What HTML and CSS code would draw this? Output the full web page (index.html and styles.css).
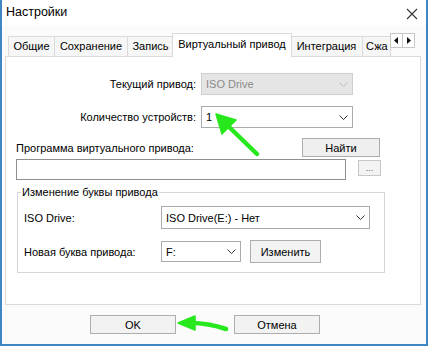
FILE: index.html
```html
<!DOCTYPE html>
<html lang="ru">
<head>
<meta charset="utf-8">
<title>Настройки</title>
<link rel="stylesheet" href="styles.css">
</head>
<body>
<div class="window">
  <div class="titlebar">
    <span class="title">Настройки</span>
    <svg class="close" width="12" height="12" viewBox="0 0 12 12"><path d="M1 1L11 11M11 1L1 11" stroke="#333" stroke-width="1.1" fill="none"/></svg>
  </div>
  <div class="tabstrip">
    <div class="tab t1">Общие</div>
    <div class="tab t2">Сохранение</div>
    <div class="tab t3">Запись</div>
    <div class="tab selected">Виртуальный привод</div>
    <div class="tab t5">Интеграция</div>
    <div class="tab t6">Сжа</div>
    <div class="scroller">
      <div class="sbtn"><svg width="5" height="7" viewBox="0 0 5 7"><path d="M4 0V7L0 3.5Z" fill="#111"/></svg></div>
      <div class="sbtn"><svg width="5" height="7" viewBox="0 0 5 7"><path d="M1 0V7L5 3.5Z" fill="#111"/></svg></div>
    </div>
  </div>
  <div class="panel">
    <div class="row r1">
      <span class="rlabel">Текущий привод:</span>
      <div class="combo disabled w152"><span>ISO Drive</span><svg class="chev" width="9" height="5" viewBox="0 0 9 5"><path d="M0.5 0.5L4.5 4.5L8.5 0.5" stroke="#bbb" fill="none"/></svg></div>
    </div>
    <div class="row r2">
      <span class="rlabel">Количество устройств:</span>
      <div class="combo w152"><span>1</span><svg class="chev" width="9" height="5" viewBox="0 0 9 5"><path d="M0.5 0.5L4.5 4.5L8.5 0.5" stroke="#333" fill="none"/></svg></div>
    </div>
    <div class="row r3">
      <span>Программа виртуального привода:</span>
      <button class="btn find">Найти</button>
    </div>
    <div class="row r4">
      <div class="input"></div>
      <button class="btn dots">...</button>
    </div>
    <div class="group">
      <span class="gtitle">Изменение буквы привода</span>
      <div class="grow ga">
        <span class="glabel">ISO Drive:</span>
        <div class="combo w209"><span>ISO Drive(E:) - Нет</span><svg class="chev" width="9" height="5" viewBox="0 0 9 5"><path d="M0.5 0.5L4.5 4.5L8.5 0.5" stroke="#333" fill="none"/></svg></div>
      </div>
      <div class="grow gb">
        <span class="glabel">Новая буква привода:</span>
        <div class="combo w80"><span>F:</span><svg class="chev" width="9" height="5" viewBox="0 0 9 5"><path d="M0.5 0.5L4.5 4.5L8.5 0.5" stroke="#333" fill="none"/></svg></div>
        <button class="btn change">Изменить</button>
      </div>
    </div>
  </div>
  <div class="footer">
    <button class="btn ok">OK</button>
    <button class="btn cancel">Отмена</button>
  </div>
</div>
<svg class="arrow arrow1" width="60" height="60" viewBox="0 0 60 60">
  <g fill="#27e81d" stroke="#27e81d" stroke-linecap="round">
    <path d="M13 12L44 42" stroke-width="4.5"/>
    <path d="M3 2L23 8L9 22Z" stroke-width="1.5" stroke-linejoin="round"/>
  </g>
</svg>
<svg class="arrow arrow2" width="60" height="22" viewBox="0 0 60 22">
  <g fill="#27e81d" stroke="#27e81d" stroke-linecap="round">
    <path d="M15 7Q32 7 50 13" stroke-width="4.5" fill="none"/>
    <path d="M2 7L19 0L19 14Z" stroke-width="1.5" stroke-linejoin="round"/>
  </g>
</svg>
</body>
</html>
```
FILE: styles.css
```css
html, body {
  margin: 0;
  padding: 0;
  background: #ffffff;
}
body {
  font-family: "Liberation Sans", Arial, sans-serif;
  font-size: 11px;
  color: #000;
  position: relative;
  width: 429px;
  height: 348px;
  overflow: hidden;
}
.window {
  width: 424px;
  height: 344px;
  border-left: 2px solid #3f86c4;
  border-right: 2px solid #3f86c4;
  border-bottom: 2px solid #3f86c4;
  background: #fbfbfb;
  display: flex;
  flex-direction: column;
}
.titlebar {
  height: 26px;
  display: flex;
  align-items: center;
  justify-content: space-between;
  background: #ffffff;
  padding: 0 8px 0 4px;
  flex: none;
}
.title {
  font-size: 12.5px;
  margin-top: -2px;
}
.close {
  margin-top: 1px;
}
.tabstrip {
  height: 30px;
  display: flex;
  align-items: flex-end;
  padding-left: 6px;
  flex: none;
  position: relative;
}
.tab {
  height: 20px;
  line-height: 19px;
  box-sizing: border-box;
  border: 1px solid #dadada;
  border-bottom: none;
  margin-right: -1px;
  background: #f6f6f6;
  text-align: center;
  white-space: nowrap;
  overflow: hidden;
}
.t1 { width: 47px; }
.t2 { width: 74px; }
.t3 { width: 47px; }
.t5 { width: 73px; }
.t6 { width: 29px; text-align: left; padding-left: 3px; }
.tab.selected {
  height: 24px;
  line-height: 20px;
  width: 120px;
  background: #ffffff;
  margin-left: -1px;
  margin-right: -2px;
  position: relative;
  z-index: 2;
  margin-bottom: -1px;
}
.scroller {
  display: flex;
  align-self: flex-start;
  margin-top: 7px;
  margin-left: 0;
}
.sbtn {
  width: 13px;
  height: 15px;
  box-sizing: border-box;
  border: 1px solid #c8c8c8;
  background: #ffffff;
  display: flex;
  align-items: center;
  justify-content: center;
  margin-right: -1px;
}
.panel {
  margin-left: 3px;
  width: 416px;
  height: 249px;
  box-sizing: border-box;
  border: 1px solid #dadada;
  background: #ffffff;
  padding-top: 16px;
  flex: none;
}
.row {
  display: flex;
  align-items: center;
}
.r1, .r2 { height: 22px; }
.r2 { margin-top: 11px; }
.rlabel {
  width: 190px;
  text-align: right;
  margin-right: 5px;
}
.combo {
  height: 22px;
  box-sizing: border-box;
  border: 1px solid #acacac;
  background: #ffffff;
  display: flex;
  align-items: center;
  justify-content: space-between;
  padding: 0 4px 0 4px;
}
.combo.disabled {
  background: #e5e5e5;
  border-color: #cfcfcf;
  color: #8a8a8a;
}
.w152 { width: 152px; }
.w209 { width: 209px; height: 23px; }
.w80 { width: 80px; height: 21px; }
.btn {
  font-family: inherit;
  font-size: 11px;
  color: #000;
  background: #efefef;
  border: 1px solid #adadad;
  padding: 0;
  margin: 0;
  box-sizing: border-box;
}
.r3 {
  margin-top: 10px;
  margin-left: 10px;
  width: 364px;
  justify-content: space-between;
  height: 19px;
}
.find { width: 78px; height: 19px; }
.r4 {
  margin-top: 2px;
  margin-left: 10px;
  align-items: flex-start;
}
.input {
  width: 330px;
  height: 21px;
  box-sizing: border-box;
  border: 1px solid #8f8f8f;
  background: #ffffff;
}
.dots {
  width: 23px;
  height: 16px;
  margin-left: 12px;
  margin-top: 1px;
  font-size: 9px;
  color: #555;
  line-height: 10px;
  background: #f3f3f3;
  border-color: #c8c8c8;
}
.group {
  position: relative;
  margin-top: 12px;
  margin-left: 11px;
  width: 368px;
  height: 81px;
  box-sizing: border-box;
  border: 1px solid #d5d5d5;
  padding: 13px 0 0 6px;
}
.gtitle {
  position: absolute;
  top: -7px;
  left: 3px;
  background: #ffffff;
  padding: 0 1px;
  line-height: 13px;
}
.grow {
  display: flex;
  align-items: center;
}
.glabel {
  width: 137px;
}
.gb {
  margin-top: 11px;
}
.change {
  width: 71px;
  height: 23px;
  margin-left: 9px;
  background: #f3f3f3;
}
.footer {
  display: flex;
  padding: 10px 0 0 88px;
  gap: 58px;
}
.ok, .cancel {
  width: 86px;
  height: 19px;
  background: #f2f2f2;
}
.arrow {
  position: absolute;
  overflow: visible;
}
.arrow1 {
  left: 213px;
  top: 112px;
}
.arrow2 {
  left: 176px;
  top: 316px;
}
```
